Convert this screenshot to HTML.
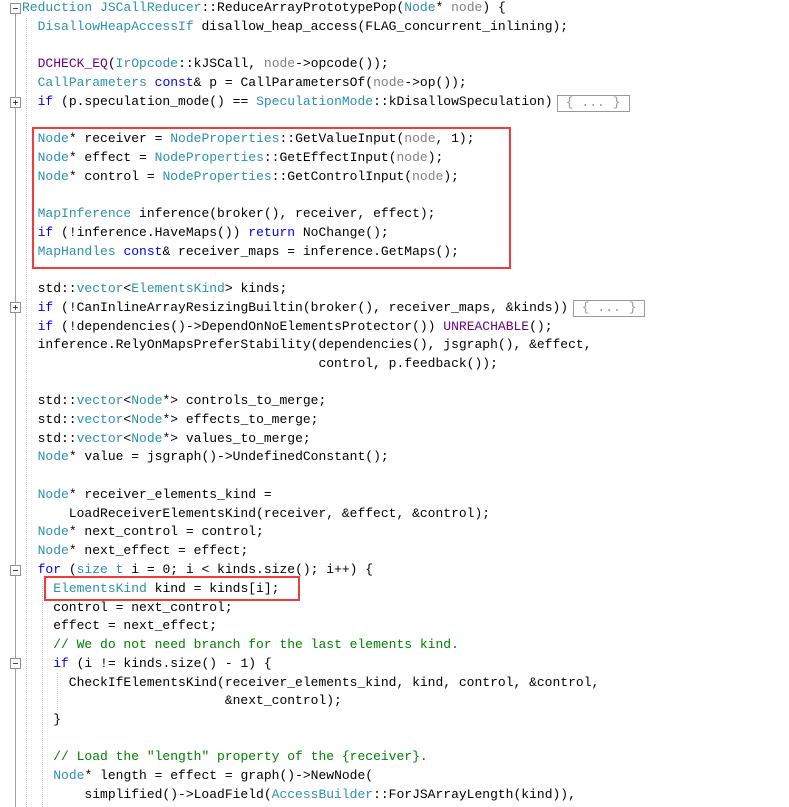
<!DOCTYPE html>
<html><head><meta charset="utf-8"><style>
body{margin:0;background:#fff;width:789px;height:807px;overflow:hidden;position:relative;font-family:"Liberation Mono",monospace;font-size:13px;}
.l{position:absolute;left:22px;white-space:pre;height:19px;line-height:19px;color:#000;}
.t{color:#2b91af}.k{color:#0000ff}.m{color:#6f008a}.g{color:#808080}.c{color:#008000}
.box{position:absolute;border:2px solid #f03c3c;}
.col{position:absolute;border:1px solid #999;color:#999;height:15px;line-height:14px;white-space:pre;}
.vl{position:absolute;width:1px;background:#a0a0a0;}
.dg{position:absolute;width:0;border-left:1px dotted #c8c8c8;}
.fb{position:absolute;left:10px;width:9px;height:9px;border:1px solid #909090;background:#fff;}
.fb:before{content:"";position:absolute;left:2px;top:4px;width:5px;height:1px;background:#444;}
.fb.p:after{content:"";position:absolute;left:4px;top:2px;width:1px;height:5px;background:#444;}
</style></head><body>
<div class="vl" style="left:15px;top:14px;height:793px"></div>
<div class="dg" style="left:26px;top:18px;height:789px"></div>
<div class="dg" style="left:42px;top:580px;height:227px"></div>
<div class="dg" style="left:57px;top:673px;height:37px"></div>
<div class="fb" style="top:3px"></div>
<div class="fb p" style="top:97px"></div>
<div class="fb p" style="top:302px"></div>
<div class="fb" style="top:565px"></div>
<div class="fb" style="top:658px"></div>
<div class="l" style="top:-2px"><span class="t">Reduction</span> <span class="t">JSCallReducer</span>::ReduceArrayPrototypePop(<span class="t">Node</span>* <span class="g">node</span>) {</div>
<div class="l" style="top:17px">  <span class="t">DisallowHeapAccessIf</span> disallow_heap_access(FLAG_concurrent_inlining);</div>
<div class="l" style="top:54px">  <span class="m">DCHECK_EQ</span>(<span class="t">IrOpcode</span>::kJSCall, <span class="g">node</span>-&gt;opcode());</div>
<div class="l" style="top:73px">  <span class="t">CallParameters</span> <span class="k">const</span>&amp; p = CallParametersOf(<span class="g">node</span>-&gt;op());</div>
<div class="l" style="top:92px">  <span class="k">if</span> (p.speculation_mode() == <span class="t">SpeculationMode</span>::kDisallowSpeculation)</div>
<div class="col" style="left:557px;top:95px;width:71px"> { ... }</div>
<div class="l" style="top:129px">  <span class="t">Node</span>* receiver = <span class="t">NodeProperties</span>::GetValueInput(<span class="g">node</span>, 1);</div>
<div class="l" style="top:148px">  <span class="t">Node</span>* effect = <span class="t">NodeProperties</span>::GetEffectInput(<span class="g">node</span>);</div>
<div class="l" style="top:167px">  <span class="t">Node</span>* control = <span class="t">NodeProperties</span>::GetControlInput(<span class="g">node</span>);</div>
<div class="l" style="top:204px">  <span class="t">MapInference</span> inference(broker(), receiver, effect);</div>
<div class="l" style="top:223px">  <span class="k">if</span> (!inference.HaveMaps()) <span class="k">return</span> NoChange();</div>
<div class="l" style="top:242px">  <span class="t">MapHandles</span> <span class="k">const</span>&amp; receiver_maps = inference.GetMaps();</div>
<div class="box" style="left:32px;top:127px;width:475px;height:138px"></div>
<div class="l" style="top:279px">  std::<span class="t">vector</span>&lt;<span class="t">ElementsKind</span>&gt; kinds;</div>
<div class="l" style="top:298px">  <span class="k">if</span> (!CanInlineArrayResizingBuiltin(broker(), receiver_maps, &amp;kinds))</div>
<div class="col" style="left:573px;top:300px;width:70px"> { ... }</div>
<div class="l" style="top:317px">  <span class="k">if</span> (!dependencies()-&gt;DependOnNoElementsProtector()) <span class="m">UNREACHABLE</span>();</div>
<div class="l" style="top:335px">  inference.RelyOnMapsPreferStability(dependencies(), jsgraph(), &amp;effect,</div>
<div class="l" style="top:354px">                                      control, p.feedback());</div>
<div class="l" style="top:391px">  std::<span class="t">vector</span>&lt;<span class="t">Node</span>*&gt; controls_to_merge;</div>
<div class="l" style="top:410px">  std::<span class="t">vector</span>&lt;<span class="t">Node</span>*&gt; effects_to_merge;</div>
<div class="l" style="top:429px">  std::<span class="t">vector</span>&lt;<span class="t">Node</span>*&gt; values_to_merge;</div>
<div class="l" style="top:447px">  <span class="t">Node</span>* value = jsgraph()-&gt;UndefinedConstant();</div>
<div class="l" style="top:485px">  <span class="t">Node</span>* receiver_elements_kind =</div>
<div class="l" style="top:504px">      LoadReceiverElementsKind(receiver, &amp;effect, &amp;control);</div>
<div class="l" style="top:522px">  <span class="t">Node</span>* next_control = control;</div>
<div class="l" style="top:541px">  <span class="t">Node</span>* next_effect = effect;</div>
<div class="l" style="top:560px">  <span class="k">for</span> (<span class="t">size t</span> i = 0; i &lt; kinds.size(); i++) {</div>
<div class="l" style="top:579px">    <span class="t">ElementsKind</span> kind = kinds[i];</div>
<div class="box" style="left:44px;top:576px;width:252px;height:21px"></div>
<div class="l" style="top:598px">    control = next_control;</div>
<div class="l" style="top:616px">    effect = next_effect;</div>
<div class="l" style="top:635px">    <span class="c">// We do not need branch for the last elements kind.</span></div>
<div class="l" style="top:654px">    <span class="k">if</span> (i != kinds.size() - 1) {</div>
<div class="l" style="top:673px">      CheckIfElementsKind(receiver_elements_kind, kind, control, &amp;control,</div>
<div class="l" style="top:691px">                          &amp;next_control);</div>
<div class="l" style="top:710px">    }</div>
<div class="l" style="top:747px">    <span class="c">// Load the "length" property of the {receiver}.</span></div>
<div class="l" style="top:766px">    <span class="t">Node</span>* length = effect = graph()-&gt;NewNode(</div>
<div class="l" style="top:785px">        simplified()-&gt;LoadField(<span class="t">AccessBuilder</span>::ForJSArrayLength(kind)),</div>
</body></html>
